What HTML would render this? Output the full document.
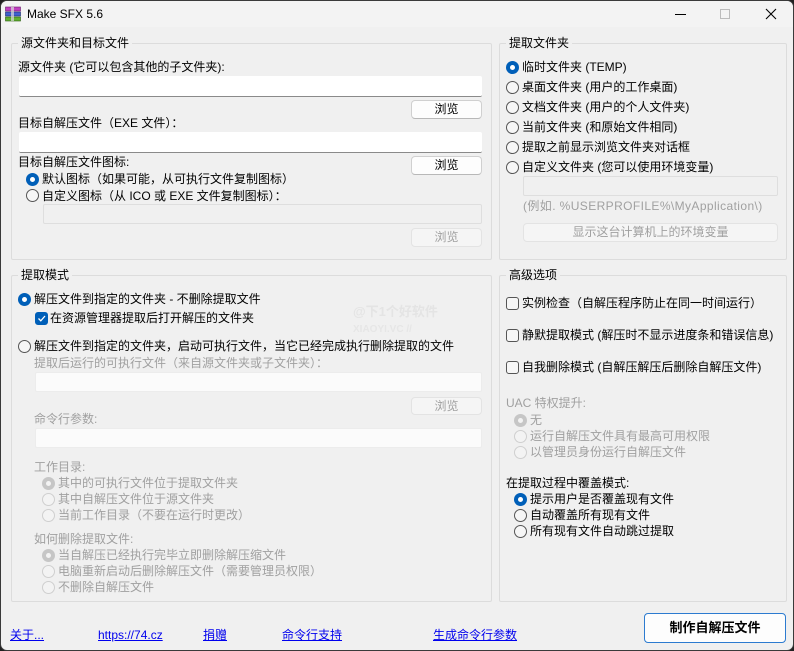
<!DOCTYPE html>
<html><head><meta charset="utf-8"><style>
*{margin:0;padding:0;box-sizing:border-box}
body{width:794px;height:651px;overflow:hidden;background:#202020;font-family:"Liberation Sans","Noto Sans CJK SC",sans-serif;font-size:12px;color:#000}
#win{position:absolute;left:0;top:0;width:794px;height:651px;background:#f0f0f0;border:1px solid #3a3a3a;border-radius:7px;overflow:hidden}
#tb{position:absolute;left:0;top:0;width:794px;height:26px;background:#f3f3f3}
.a{position:absolute;white-space:nowrap;line-height:16px}
.g{position:absolute;border:1px solid #dcdcdc;border-radius:2px}
.gt{position:absolute;background:#f0f0f0;padding:0 3px;line-height:16px;white-space:nowrap}
.in{position:absolute;background:#fff;border-bottom:1px solid #8a8a8a;border-radius:2px}
.ind{position:absolute;background:#f0f0f0;border:1px solid #dedede;border-radius:2px}
.inw{position:absolute;background:#fbfbfb;border:1px solid #ececec;border-radius:2px}
.btn{position:absolute;background:#fdfdfd;border:1px solid #d0d0d0;border-bottom-color:#b8b8b8;border-radius:4px;text-align:center;line-height:16px}
.btnd{position:absolute;background:#f5f5f5;border:1px solid #e3e3e3;border-radius:4px;text-align:center;line-height:16px;color:#a0a0a0}
.r{position:absolute;width:13px;height:13px;border-radius:50%;border:1px solid #555;background:#f6f6f6}
.rs{position:absolute;width:13px;height:13px;border-radius:50%;background:#005fb8}
.rs::after{content:"";position:absolute;left:4px;top:4px;width:5px;height:5px;border-radius:50%;background:#fff}
.rd{position:absolute;width:13px;height:13px;border-radius:50%;border:1px solid #cfcfcf;background:#f3f3f3}
.rds{position:absolute;width:13px;height:13px;border-radius:50%;background:#c6c6c6}
.rds::after{content:"";position:absolute;left:4px;top:4px;width:5px;height:5px;border-radius:50%;background:#f3f3f3}
.cb{position:absolute;width:13px;height:13px;border-radius:3px;border:1px solid #555;background:#f6f6f6}
.gray{color:#a0a0a0}
.lk{position:absolute;color:#0000ee;text-decoration:underline;line-height:16px;white-space:nowrap}
</style></head><body><div id="win">
<div id="tb">
<svg style="position:absolute;left:4px;top:5px" width="16" height="16" viewBox="0 0 16 16">
<rect x="0.5" y="1" width="15" height="4" fill="#c040c0" stroke="#6a1a6a" stroke-width=".6"/>
<rect x="0.5" y="6" width="15" height="4" fill="#4060d0" stroke="#1a2a6a" stroke-width=".6"/>
<rect x="0.5" y="11" width="15" height="4" fill="#60b030" stroke="#2a5a10" stroke-width=".6"/>
<rect x="6" y="1" width="3" height="14" fill="#ddd" opacity=".7"/></svg>
<div class="a" style="left:26px;top:5px">Make SFX 5.6</div>
<div style="position:absolute;left:674px;top:13px;width:11px;height:1px;background:#000"></div>
<div style="position:absolute;left:719px;top:8px;width:10px;height:10px;border:1px solid #bbb"></div>
<svg style="position:absolute;left:764px;top:7px" width="12" height="12"><path d="M1 1L11 11M11 1L1 11" stroke="#000" stroke-width="1.1"/></svg>
</div>

<!-- group 1 -->
<div class="g" style="left:10px;top:42px;width:481px;height:217px"></div>
<div class="gt" style="left:17px;top:34px">源文件夹和目标文件</div>
<div class="a" style="left:17px;top:58px">源文件夹 (它可以包含其他的子文件夹):</div>
<div class="in" style="left:18px;top:75px;width:463px;height:21px"></div>
<div class="btn" style="left:410px;top:99px;width:71px;height:19px">浏览</div>
<div class="a" style="left:17px;top:114px">目标自解压文件（EXE 文件）：</div>
<div class="in" style="left:18px;top:131px;width:463px;height:21px"></div>
<div class="a" style="left:17px;top:153px">目标自解压文件图标:</div>
<div class="btn" style="left:410px;top:155px;width:71px;height:19px">浏览</div>
<div class="rs" style="left:25px;top:172px"></div>
<div class="a" style="left:41px;top:170px">默认图标（如果可能，从可执行文件复制图标）</div>
<div class="r" style="left:25px;top:188px"></div>
<div class="a" style="left:41px;top:187px">自定义图标（从 ICO 或 EXE 文件复制图标）：</div>
<div class="ind" style="left:42px;top:203px;width:439px;height:20px"></div>
<div class="btnd" style="left:410px;top:227px;width:71px;height:19px">浏览</div>

<!-- group 2 -->
<div class="g" style="left:498px;top:42px;width:288px;height:217px"></div>
<div class="gt" style="left:505px;top:34px">提取文件夹</div>
<div class="rs" style="left:505px;top:60px"></div><div class="a" style="left:521px;top:58px">临时文件夹 (TEMP)</div>
<div class="r" style="left:505px;top:80px"></div><div class="a" style="left:521px;top:78px">桌面文件夹 (用户的工作桌面)</div>
<div class="r" style="left:505px;top:100px"></div><div class="a" style="left:521px;top:98px">文档文件夹 (用户的个人文件夹)</div>
<div class="r" style="left:505px;top:120px"></div><div class="a" style="left:521px;top:118px">当前文件夹 (和原始文件相同)</div>
<div class="r" style="left:505px;top:140px"></div><div class="a" style="left:521px;top:138px">提取之前显示浏览文件夹对话框</div>
<div class="r" style="left:505px;top:160px"></div><div class="a" style="left:521px;top:158px">自定义文件夹 (您可以使用环境变量)</div>
<div class="ind" style="left:522px;top:175px;width:255px;height:20px"></div>
<div class="a gray" style="left:522px;top:197px;letter-spacing:0.4px">(例如. %USERPROFILE%\MyApplication\)</div>
<div class="btnd" style="left:522px;top:222px;width:255px;height:19px">显示这台计算机上的环境变量</div>

<!-- group 3 -->
<div class="g" style="left:10px;top:274px;width:481px;height:327px"></div>
<div class="gt" style="left:17px;top:266px">提取模式</div>
<div class="rs" style="left:17px;top:292px"></div><div class="a" style="left:33px;top:290px">解压文件到指定的文件夹 - 不删除提取文件</div>
<div class="a" style="left:352px;top:303px;color:#e4e4e4;font-weight:bold;font-size:13px">@下1个好软件</div>
<div class="a" style="left:352px;top:321px;color:#e6e6e6;font-weight:bold;font-size:10px">XIAOYI.VC //</div>
<div class="cb" style="left:34px;top:311px;background:#005fb8;border-color:#005fb8"><svg width="11" height="11" style="position:absolute;left:0;top:0"><path d="M2.5 5.5L4.8 7.8L9 3" stroke="#fff" stroke-width="1.3" fill="none"/></svg></div>
<div class="a" style="left:49px;top:309px">在资源管理器提取后打开解压的文件夹</div>
<div class="r" style="left:17px;top:339px"></div><div class="a" style="left:33px;top:337px">解压文件到指定的文件夹，启动可执行文件，当它已经完成执行删除提取的文件</div>
<div class="a gray" style="left:33px;top:354px">提取后运行的可执行文件（来自源文件夹或子文件夹）：</div>
<div class="inw" style="left:34px;top:371px;width:447px;height:20px"></div>
<div class="btnd" style="left:410px;top:396px;width:71px;height:18px">浏览</div>
<div class="a gray" style="left:33px;top:410px">命令行参数:</div>
<div class="inw" style="left:34px;top:427px;width:447px;height:20px"></div>
<div class="a gray" style="left:33px;top:458px">工作目录:</div>
<div class="rds" style="left:41px;top:476px"></div><div class="a gray" style="left:57px;top:474px">其中的可执行文件位于提取文件夹</div>
<div class="rd" style="left:41px;top:492px"></div><div class="a gray" style="left:57px;top:490px">其中自解压文件位于源文件夹</div>
<div class="rd" style="left:41px;top:508px"></div><div class="a gray" style="left:57px;top:506px">当前工作目录（不要在运行时更改）</div>
<div class="a gray" style="left:33px;top:530px">如何删除提取文件:</div>
<div class="rds" style="left:41px;top:548px"></div><div class="a gray" style="left:57px;top:546px">当自解压已经执行完毕立即删除解压缩文件</div>
<div class="rd" style="left:41px;top:564px"></div><div class="a gray" style="left:57px;top:562px">电脑重新启动后删除解压文件（需要管理员权限）</div>
<div class="rd" style="left:41px;top:580px"></div><div class="a gray" style="left:57px;top:578px">不删除自解压文件</div>

<!-- group 4 -->
<div class="g" style="left:498px;top:274px;width:288px;height:327px"></div>
<div class="gt" style="left:505px;top:266px">高级选项</div>
<div class="cb" style="left:505px;top:296px"></div><div class="a" style="left:521px;top:294px">实例检查（自解压程序防止在同一时间运行）</div>
<div class="cb" style="left:505px;top:328px"></div><div class="a" style="left:521px;top:326px">静默提取模式 (解压时不显示进度条和错误信息)</div>
<div class="cb" style="left:505px;top:360px"></div><div class="a" style="left:521px;top:358px">自我删除模式 (自解压解压后删除自解压文件)</div>
<div class="a gray" style="left:505px;top:394px">UAC 特权提升:</div>
<div class="rds" style="left:513px;top:413px"></div><div class="a gray" style="left:529px;top:411px">无</div>
<div class="rd" style="left:513px;top:429px"></div><div class="a gray" style="left:529px;top:427px">运行自解压文件具有最高可用权限</div>
<div class="rd" style="left:513px;top:445px"></div><div class="a gray" style="left:529px;top:443px">以管理员身份运行自解压文件</div>
<div class="a" style="left:505px;top:474px">在提取过程中覆盖模式:</div>
<div class="rs" style="left:513px;top:492px"></div><div class="a" style="left:529px;top:490px">提示用户是否覆盖现有文件</div>
<div class="r" style="left:513px;top:508px"></div><div class="a" style="left:529px;top:506px">自动覆盖所有现有文件</div>
<div class="r" style="left:513px;top:524px"></div><div class="a" style="left:529px;top:522px">所有现有文件自动跳过提取</div>

<!-- bottom -->
<div class="lk" style="left:9px;top:626px">关于...</div>
<div class="lk" style="left:97px;top:626px">https://74.cz</div>
<div class="lk" style="left:202px;top:626px">捐赠</div>
<div class="lk" style="left:281px;top:626px">命令行支持</div>
<div class="lk" style="left:432px;top:626px">生成命令行参数</div>
<div style="position:absolute;left:643px;top:612px;width:142px;height:30px;background:#fdfdfd;border:1px solid #2c7bd0;border-radius:4px;text-align:center;line-height:28px;font-weight:bold;font-size:13px">制作自解压文件</div>
</div></body></html>
